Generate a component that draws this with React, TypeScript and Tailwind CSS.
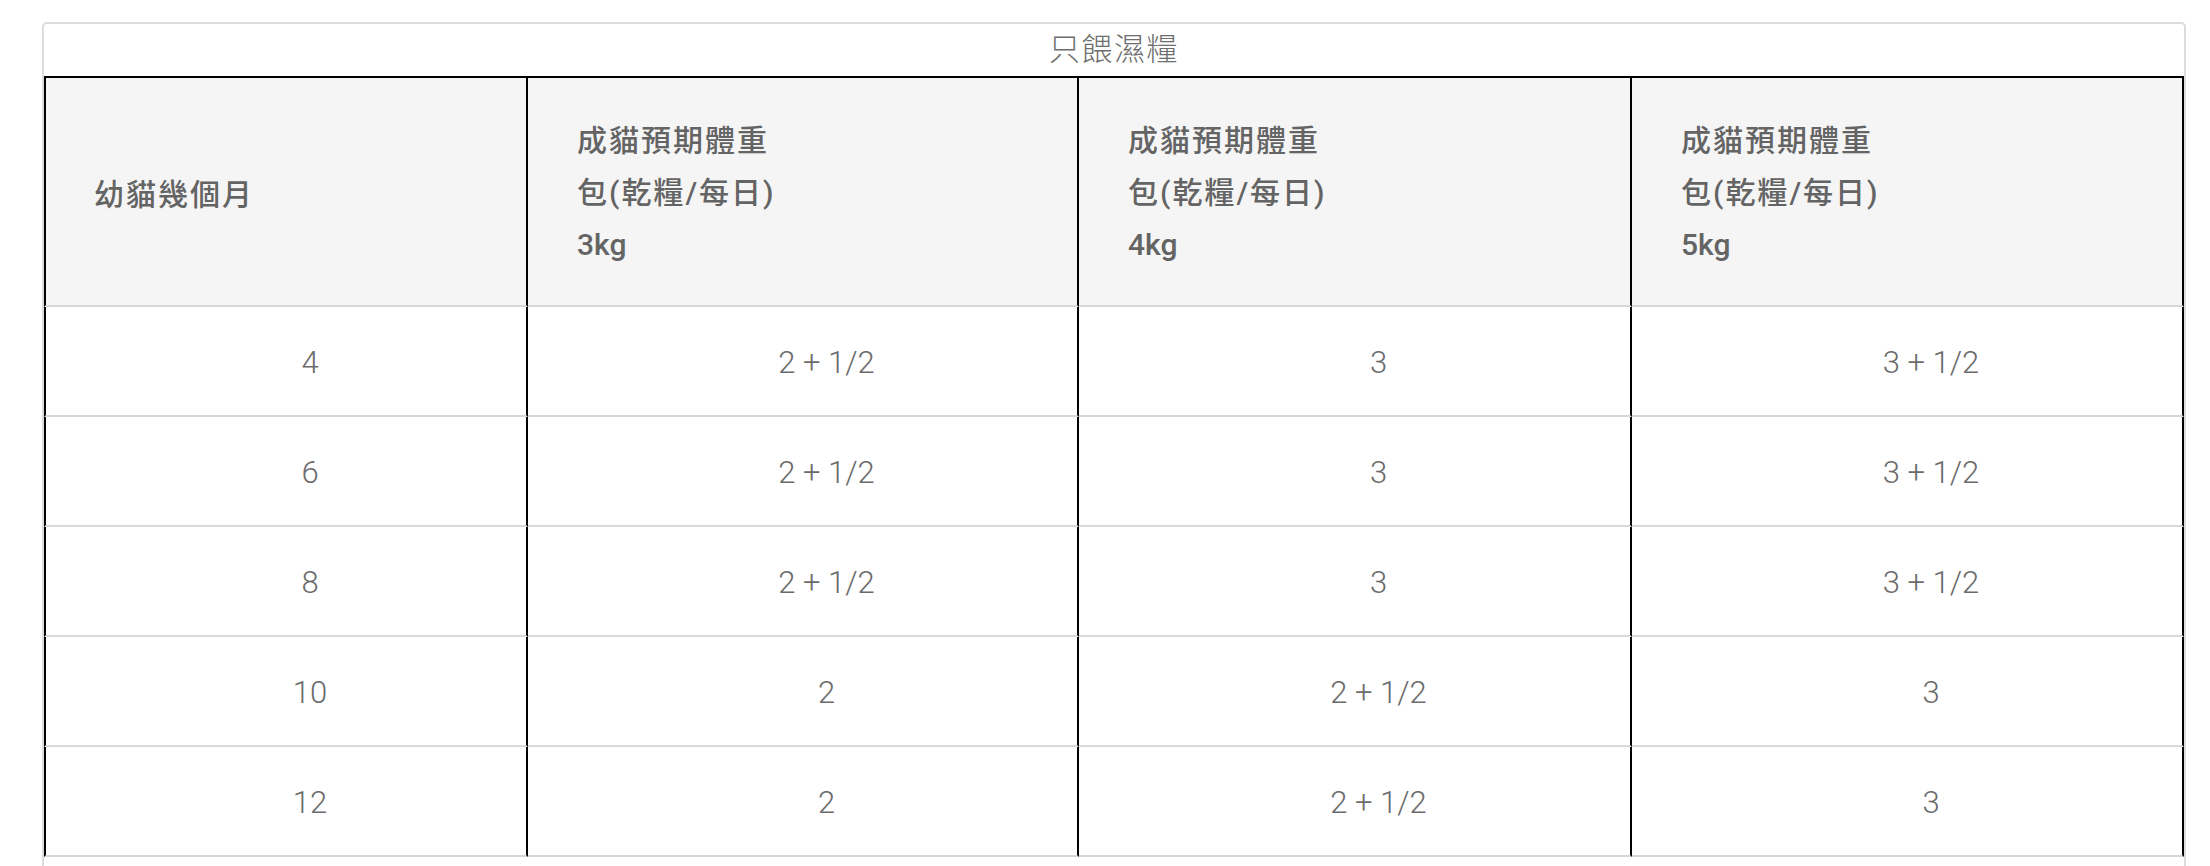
const rows = [
  { month: "4", w3: "2 + 1/2", w4: "3", w5: "3 + 1/2" },
  { month: "6", w3: "2 + 1/2", w4: "3", w5: "3 + 1/2" },
  { month: "8", w3: "2 + 1/2", w4: "3", w5: "3 + 1/2" },
  { month: "10", w3: "2", w4: "2 + 1/2", w5: "3" },
  { month: "12", w3: "2", w4: "2 + 1/2", w5: "3" },
];

const weights = ["3kg", "4kg", "5kg"];

const font = "font-['Roboto','Noto_Sans_CJK_TC',sans-serif]";

export default function App() {
  return (
    <div className={`min-h-screen bg-white pt-[22px] pl-[42px] ${font}`}>
      <div className="w-[2144px] rounded-[5px] border-2 border-[#dcdcdc] pb-[24px]">
        {/* 標題 */}
        <div className="flex h-[52px] items-center justify-center text-[31px] font-light tracking-[1.5px] text-[#6e6e6e]">
          只餵濕糧
        </div>

        {/* 表格 */}
        <div className="grid grid-cols-[484px_551px_553px_552px] border-t-2 border-black">
          {/* 表頭 */}
          <div className="flex items-center border-r-2 border-b-2 border-l-2 border-r-black border-b-[#d9d9d9] border-l-black bg-[#f5f5f5] pt-[5px] pl-[48px] text-[30px] font-medium tracking-[2px] text-[#646464]">
            幼貓幾個月
          </div>
          {weights.map((w) => (
            <div
              key={w}
              className="border-r-2 border-b-2 border-r-black border-b-[#d9d9d9] bg-[#f5f5f5] pt-[37px] pb-[34px] pl-[49px] text-[30px] leading-[52px] font-medium tracking-[2px] text-[#646464]"
            >
              <div>成貓預期體重</div>
              <div>包(乾糧/每日)</div>
              <div className="tracking-normal">{w}</div>
            </div>
          ))}

          {/* 內容 */}
          {rows.map((row) => (
            <div key={row.month} className="contents">
              <div className="flex h-[110px] items-center justify-center border-r-2 border-b-2 border-l-2 border-r-black border-b-[#d9d9d9] border-l-black pt-[5px] pl-[48px] text-[31px] font-light text-[#6b6b6b]">
                {row.month}
              </div>
              {[row.w3, row.w4, row.w5].map((v, i) => (
                <div
                  key={i}
                  className="flex h-[110px] items-center justify-center border-r-2 border-b-2 border-r-black border-b-[#d9d9d9] pt-[5px] pl-[48px] text-[31px] font-light text-[#6b6b6b]"
                >
                  {v}
                </div>
              ))}
            </div>
          ))}
        </div>
      </div>
    </div>
  );
}
